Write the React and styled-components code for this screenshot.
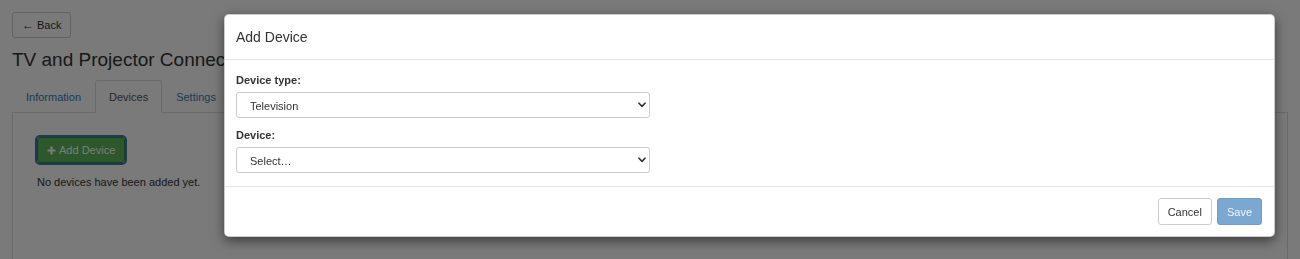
import React from 'react';
import styled, { createGlobalStyle } from 'styled-components';

const GlobalStyle = createGlobalStyle`
  html, body {
    margin: 0;
    padding: 0;
    background: #fff;
    font-family: "Liberation Sans", Arial, Helvetica, sans-serif;
    font-size: 11px;
    color: #333;
    overflow: hidden;
  }
  * { box-sizing: border-box; }
`;

const Page = styled.div`
  padding: 12px;
  height: 259px;
  overflow: hidden;
`;

const PlainButton = styled.button`
  font-family: inherit;
  font-size: 11px;
  height: 26px;
  padding: 0 9px;
  border-radius: 3px;
  border: 1px solid #ccc;
  background: #fff;
  color: #333;
  display: inline-flex;
  align-items: center;
  gap: 3px;
`;

const Arrow = styled.span`
  font-size: 12px;
  line-height: 1;
`;

const Title = styled.h1`
  margin: 10px 0 8px;
  font-size: 19px;
  font-weight: 400;
  line-height: 24px;
  color: #333;
  white-space: nowrap;
`;

const TabBar = styled.div`
  display: flex;
  border-bottom: 1px solid #ddd;
  height: 33px;
`;

const Tab = styled.div`
  height: 33px;
  margin-bottom: -1px;
  padding: 0 13px;
  display: flex;
  align-items: center;
  font-size: 11px;
  border: 1px solid ${p => (p.$active ? '#ddd' : 'transparent')};
  border-bottom-color: ${p => (p.$active ? '#fff' : 'transparent')};
  border-radius: 3px 3px 0 0;
  background: ${p => (p.$active ? '#fff' : 'transparent')};
  color: ${p => (p.$active ? '#555' : '#337ab7')};
`;

const Panel = styled.div`
  border: 1px solid #ddd;
  border-top: none;
  padding: 24px 24px;
  height: 160px;
`;

const SuccessButton = styled.button`
  font-family: inherit;
  font-size: 11px;
  height: 26px;
  padding: 0 9px;
  border-radius: 3px;
  border: 1px solid #398439;
  background: #5cb85c;
  color: #fff;
  outline: 2px solid #3d78b4;
  outline-offset: 0;
  display: inline-flex;
  align-items: center;
  gap: 3px;
`;

const Empty = styled.p`
  margin: 13px 0 0;
  font-size: 11px;
  color: #333;
`;

const Backdrop = styled.div`
  position: fixed;
  inset: 0;
  background: rgba(0, 0, 0, 0.52);
`;

const Modal = styled.div`
  position: absolute;
  top: 14px;
  left: 224px;
  width: 1051px;
  background: #fff;
  border: 1px solid rgba(0, 0, 0, 0.2);
  border-radius: 5px;
  box-shadow: 0 4px 12px rgba(0, 0, 0, 0.5);
`;

const ModalHeader = styled.div`
  padding: 11px 11px;
  border-bottom: 1px solid #e5e5e5;
`;

const ModalTitle = styled.h4`
  margin: 0;
  font-size: 14px;
  font-weight: 400;
  line-height: 22px;
  color: #333;
`;

const ModalBody = styled.div`
  padding: 10px 11px 13px;
  display: flex;
  flex-direction: column;
`;

const Label = styled.label`
  font-weight: 700;
  font-size: 11px;
  line-height: 18px;
  margin: ${p => (p.$first ? '1px' : '8px')} 0 3px;
  color: #333;
`;

const SelectWrap = styled.div`
  position: relative;
  width: 414px;
  height: 26px;
`;

const Select = styled.select`
  appearance: none;
  -webkit-appearance: none;
  width: 100%;
  height: 26px;
  padding: 1px 24px 0 13px;
  font-family: inherit;
  font-size: 11px;
  color: #333;
  background: #fff;
  border: 1px solid #ccc;
  border-radius: 3px;
`;

const Chevron = styled.svg`
  position: absolute;
  right: 4px;
  top: 10px;
  width: 8px;
  height: 6px;
  pointer-events: none;
`;

const ModalFooter = styled.div`
  border-top: 1px solid #e5e5e5;
  padding: 11px 12px 11px;
  display: flex;
  justify-content: flex-end;
  gap: 5px;
`;

const FooterButton = styled.button`
  font-family: inherit;
  font-size: 11px;
  height: 27px;
  padding: 0 9px;
  border-radius: 3px;
  border: 1px solid ${p => (p.$primary ? '#6f9cc8' : '#ccc')};
  background: ${p => (p.$primary ? '#7aa8d1' : '#fff')};
  color: ${p => (p.$primary ? '#eef4fa' : '#333')};
`;

const DeviceSelect = ({ value }) => (
  <SelectWrap>
    <Select defaultValue={value}>
      <option>{value}</option>
    </Select>
    <Chevron viewBox="0 0 8 6">
      <path d="M1 1.2 L4 4.4 L7 1.2" fill="none" stroke="#333" strokeWidth="1.6" strokeLinecap="round" strokeLinejoin="round" />
    </Chevron>
  </SelectWrap>
);

export default function App() {
  return (
    <>
      <GlobalStyle />
      <Page>
        <PlainButton><Arrow>←</Arrow>Back</PlainButton>
        <Title>TV and Projector Connections</Title>
        <TabBar>
          <Tab>Information</Tab>
          <Tab $active>Devices</Tab>
          <Tab>Settings</Tab>
        </TabBar>
        <Panel>
          <SuccessButton>
            <svg width="9" height="9" viewBox="0 0 9 9">
              <path d="M4.5 0.5v8M0.5 4.5h8" stroke="#fff" strokeWidth="2.2" />
            </svg>
            Add Device
          </SuccessButton>
          <Empty>No devices have been added yet.</Empty>
        </Panel>
      </Page>
      <Backdrop />
      <Modal>
        <ModalHeader>
          <ModalTitle>Add Device</ModalTitle>
        </ModalHeader>
        <ModalBody>
          <Label $first>Device type:</Label>
          <DeviceSelect value="Television" />
          <Label>Device:</Label>
          <DeviceSelect value="Select…" />
        </ModalBody>
        <ModalFooter>
          <FooterButton>Cancel</FooterButton>
          <FooterButton $primary>Save</FooterButton>
        </ModalFooter>
      </Modal>
    </>
  );
}
